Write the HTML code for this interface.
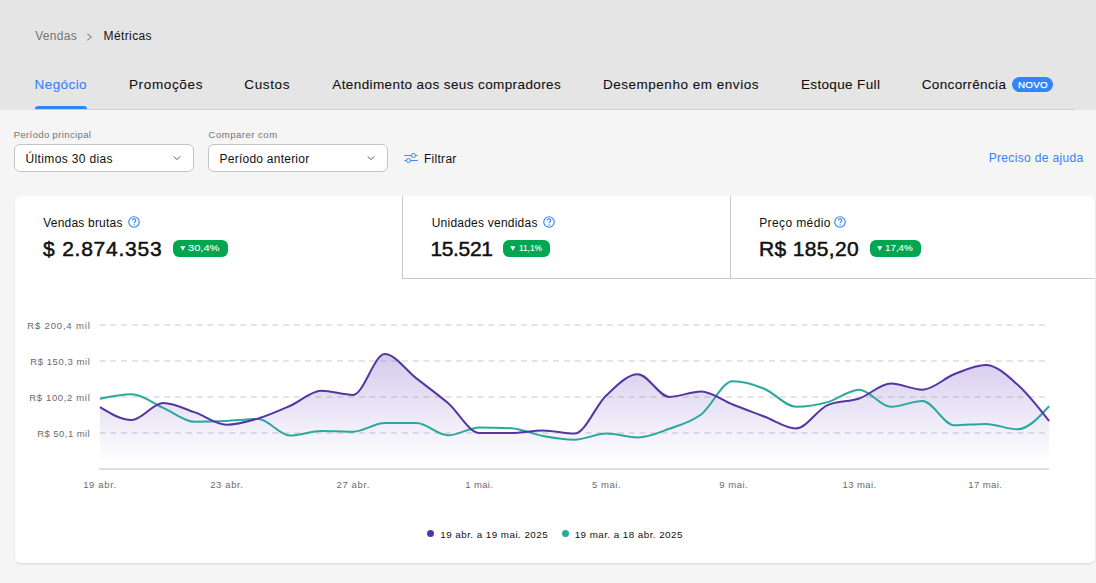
<!DOCTYPE html>
<html><head><meta charset="utf-8"><style>
*{margin:0;padding:0;box-sizing:border-box}
html,body{width:1096px;height:583px;overflow:hidden;background:#f5f5f5;font-family:"Liberation Sans",sans-serif}
.t{position:absolute;white-space:nowrap}
.a{position:absolute}
#hdr{position:absolute;left:0;top:0;width:1096px;height:110px;background:#e5e5e5}
#hline{position:absolute;left:35px;top:109px;width:1040px;height:1px;background:#cecece}
#uline{position:absolute;left:35px;top:106px;width:52px;height:3px;background:#3483fa;border-radius:3px 3px 0 0}
.novo{position:absolute;left:1012px;top:77px;width:41px;height:15px;border-radius:8px;background:#3483fa;color:#fff;font-size:9.5px;line-height:15px;text-align:center;font-weight:700;letter-spacing:0.2px}
.sel{position:absolute;top:144px;height:28px;background:#fff;border:1px solid #c4c4c4;border-radius:6px}
#card{position:absolute;left:15px;top:196px;width:1080px;height:367px;background:#fff;border-radius:6px;box-shadow:0 1px 2px rgba(0,0,0,.12)}
.badge{position:absolute;top:240px;height:17px;border-radius:6px;background:#00a650;color:#fff;font-size:10px;line-height:17px;text-align:center;letter-spacing:-0.2px}
.help{position:absolute;width:12px;height:12px}
</style></head><body>
<div id="hdr"></div><div id="hline"></div><div id="uline"></div>
<div class="t" style="left:35.24px;top:30.00px;font-size:12px;line-height:12px;color:#737373;font-weight:400;letter-spacing:0.292px;">Vendas</div>
<svg class="a" style="left:85px;top:32px" width="9" height="10" viewBox="0 0 9 10"><path d="M2.3,1.6L6.2,5L2.3,8.4" fill="none" stroke="#8c8c8c" stroke-width="1.1"/></svg>
<div class="t" style="left:103.54px;top:30.00px;font-size:12px;line-height:12px;color:#111;font-weight:400;letter-spacing:0.389px;">Métricas</div>
<div class="t" style="left:34.62px;top:78.00px;font-size:13.5px;line-height:13.5px;color:#3483fa;font-weight:400;letter-spacing:0.412px;-webkit-text-stroke:0.1px #3483fa">Negócio</div>
<div class="t" style="left:128.92px;top:78.00px;font-size:13.5px;line-height:13.5px;color:#111;font-weight:400;letter-spacing:0.655px;-webkit-text-stroke:0.1px #111">Promoções</div>
<div class="t" style="left:244.32px;top:78.00px;font-size:13.5px;line-height:13.5px;color:#111;font-weight:400;letter-spacing:0.632px;-webkit-text-stroke:0.1px #111">Custos</div>
<div class="t" style="left:332.3px;top:78.00px;font-size:13.5px;line-height:13.5px;color:#111;font-weight:400;letter-spacing:0.398px;-webkit-text-stroke:0.1px #111">Atendimento aos seus compradores</div>
<div class="t" style="left:602.92px;top:78.00px;font-size:13.5px;line-height:13.5px;color:#111;font-weight:400;letter-spacing:0.524px;-webkit-text-stroke:0.1px #111">Desempenho em envios</div>
<div class="t" style="left:800.92px;top:78.00px;font-size:13.5px;line-height:13.5px;color:#111;font-weight:400;letter-spacing:0.36px;-webkit-text-stroke:0.1px #111">Estoque Full</div>
<div class="t" style="left:921.72px;top:78.00px;font-size:13.5px;line-height:13.5px;color:#111;font-weight:400;letter-spacing:0.356px;-webkit-text-stroke:0.1px #111">Concorrência</div>
<div class="a" style="left:1012px;top:77px;width:41px;height:15px;border-radius:8px;background:#3483fa"></div>
<div class="t" style="left:1018.02px;top:80.00px;font-size:9.8px;line-height:9.8px;color:#fff;font-weight:400;letter-spacing:0.238px;-webkit-text-stroke:0.25px #fff">NOVO</div>
<div class="t" style="left:13.74px;top:130.00px;font-size:9.5px;line-height:9.5px;color:#737373;font-weight:400;letter-spacing:0.367px;">Período principal</div>
<div class="t" style="left:208.52px;top:130.00px;font-size:9.5px;line-height:9.5px;color:#737373;font-weight:400;letter-spacing:0.523px;">Comparer com</div>
<div class="sel" style="left:14px;width:180px"></div>
<div class="sel" style="left:208px;width:180px"></div>
<div class="t" style="left:25.6px;top:153.00px;font-size:12px;line-height:12px;color:#111;font-weight:400;letter-spacing:0.343px;">Últimos 30 dias</div>
<div class="t" style="left:219.54px;top:153.00px;font-size:12px;line-height:12px;color:#111;font-weight:400;letter-spacing:0.24px;">Período anterior</div>
<svg class="a" style="left:171.5px;top:154px" width="10" height="8" viewBox="0 0 10 8"><path d="M1.8,2.4L5,5.6L8.2,2.4" fill="none" stroke="#555" stroke-width="1"/></svg>
<svg class="a" style="left:366px;top:154px" width="10" height="8" viewBox="0 0 10 8"><path d="M1.8,2.4L5,5.6L8.2,2.4" fill="none" stroke="#555" stroke-width="1"/></svg>
<svg class="a" style="left:403px;top:151px" width="16" height="13" viewBox="0 0 16 13"><g fill="none" stroke="#3483fa" stroke-width="0.95"><path d="M1.3,4.5H8.4M12.6,4.5H14.7"/><circle cx="10.5" cy="4.5" r="2.05"/><path d="M1.3,9.5H3.4M7.6,9.5H14.7"/><circle cx="5.5" cy="9.5" r="2.05"/></g></svg>
<div class="t" style="left:423.94px;top:153.00px;font-size:12px;line-height:12px;color:#111;font-weight:400;letter-spacing:0.29px;">Filtrar</div>
<div class="t" style="left:988.64px;top:152.00px;font-size:12px;line-height:12px;color:#3483fa;font-weight:400;letter-spacing:0.351px;">Preciso de ajuda</div>
<div id="card"></div>
<div class="a" style="left:402px;top:196px;width:1px;height:83px;background:#c9c9c9"></div>
<div class="a" style="left:730px;top:196px;width:1px;height:83px;background:#c9c9c9"></div>
<div class="a" style="left:402px;top:278px;width:693px;height:1px;background:#c9c9c9"></div>
<div class="t" style="left:43.24px;top:217.00px;font-size:12px;line-height:12px;color:#111;font-weight:400;letter-spacing:0.203px;">Vendas brutas</div>
<svg class="help" style="left:128.2px;top:215.8px" viewBox="0 0 12 12"><circle cx="6" cy="6" r="5.25" fill="none" stroke="#3483fa" stroke-width="1.15"/><path d="M4.2,4.6C4.2,3.5,5,2.9,6,2.9C7,2.9,7.8,3.6,7.8,4.5C7.8,5.7,6.1,5.8,6.1,7.2" fill="none" stroke="#3483fa" stroke-width="1.1"/><circle cx="6.1" cy="8.9" r="0.7" fill="#3483fa"/></svg>
<div class="t" style="left:431.7px;top:217.00px;font-size:12px;line-height:12px;color:#111;font-weight:400;letter-spacing:0.229px;">Unidades vendidas</div>
<svg class="help" style="left:543px;top:215.8px" viewBox="0 0 12 12"><circle cx="6" cy="6" r="5.25" fill="none" stroke="#3483fa" stroke-width="1.15"/><path d="M4.2,4.6C4.2,3.5,5,2.9,6,2.9C7,2.9,7.8,3.6,7.8,4.5C7.8,5.7,6.1,5.8,6.1,7.2" fill="none" stroke="#3483fa" stroke-width="1.1"/><circle cx="6.1" cy="8.9" r="0.7" fill="#3483fa"/></svg>
<div class="t" style="left:759.24px;top:217.00px;font-size:12px;line-height:12px;color:#111;font-weight:400;letter-spacing:0.386px;">Preço médio</div>
<svg class="help" style="left:834.2px;top:215.8px" viewBox="0 0 12 12"><circle cx="6" cy="6" r="5.25" fill="none" stroke="#3483fa" stroke-width="1.15"/><path d="M4.2,4.6C4.2,3.5,5,2.9,6,2.9C7,2.9,7.8,3.6,7.8,4.5C7.8,5.7,6.1,5.8,6.1,7.2" fill="none" stroke="#3483fa" stroke-width="1.1"/><circle cx="6.1" cy="8.9" r="0.7" fill="#3483fa"/></svg>
<div class="t" style="left:43.09px;top:238.00px;font-size:21px;line-height:21px;color:#111;font-weight:400;letter-spacing:0.767px;-webkit-text-stroke:0.5px #111">$ 2.874.353</div>
<div class="t" style="left:430.42px;top:238.00px;font-size:21px;line-height:21px;color:#111;font-weight:400;letter-spacing:-0.348px;-webkit-text-stroke:0.5px #111">15.521</div>
<div class="t" style="left:759.12px;top:238.00px;font-size:21px;line-height:21px;color:#111;font-weight:400;letter-spacing:0.338px;-webkit-text-stroke:0.5px #111">R$ 185,20</div>
<div class="badge" style="left:172.7px;width:55.4px"></div>
<svg class="a" style="left:179.6px;top:245.8px" width="6" height="5" viewBox="0 0 6 5"><path d="M0.2,0.2H5.4L2.8,4.8Z" fill="#fff"/></svg>
<div class="t" style="left:188.36px;top:243.00px;font-size:9.5px;line-height:9.5px;color:#fff;font-weight:400;letter-spacing:0px;-webkit-text-stroke:0.1px #fff;transform:scaleX(1.167);transform-origin:0 0">30,4%</div>
<div class="badge" style="left:503.2px;width:46.8px"></div>
<svg class="a" style="left:510.09999999999997px;top:245.8px" width="6" height="5" viewBox="0 0 6 5"><path d="M0.2,0.2H5.4L2.8,4.8Z" fill="#fff"/></svg>
<div class="t" style="left:518.68px;top:243.00px;font-size:9.5px;line-height:9.5px;color:#fff;font-weight:400;letter-spacing:0px;-webkit-text-stroke:0.1px #fff;transform:scaleX(0.874);transform-origin:0 0">11,1%</div>
<div class="badge" style="left:869.7px;width:51.5px"></div>
<svg class="a" style="left:876.6px;top:245.8px" width="6" height="5" viewBox="0 0 6 5"><path d="M0.2,0.2H5.4L2.8,4.8Z" fill="#fff"/></svg>
<div class="t" style="left:885.07px;top:243.00px;font-size:9.5px;line-height:9.5px;color:#fff;font-weight:400;letter-spacing:0px;-webkit-text-stroke:0.1px #fff;transform:scaleX(1.031);transform-origin:0 0">17,4%</div>
<svg class="a" style="left:0;top:0" width="1096" height="583" viewBox="0 0 1096 583">
<defs><linearGradient id="g" x1="0" y1="0" x2="0" y2="1"><stop offset="0" stop-color="#7b5cc4" stop-opacity="0.32"/><stop offset="0.95" stop-color="#7b5cc4" stop-opacity="0"/></linearGradient></defs>
<g stroke="#dcdcdc" stroke-width="1.6" stroke-dasharray="6 4.8">
<path d="M99.5,325H1046"/><path d="M99.5,361H1046"/><path d="M99.5,397H1046"/><path d="M99.5,433H1046"/>
</g>
<path d="M100.0,407.2C110.5,413.6,121.1,420.0,131.6,420.0C142.2,420.0,152.7,403.1,163.3,403.1C173.8,403.1,184.4,408.8,194.9,412.4C205.5,416.0,216.0,424.7,226.5,424.7C237.1,424.7,247.6,421.6,258.2,418.5C268.7,415.4,279.3,410.6,289.8,406.0C300.4,401.4,310.9,390.7,321.4,390.7C332.0,390.7,342.5,394.9,353.1,394.9C363.6,394.9,374.2,354.1,384.7,354.1C395.3,354.1,405.8,370.2,416.4,378.4C426.9,386.6,437.4,394.0,448.0,403.1C458.5,412.2,469.1,433.0,479.6,433.0C490.2,433.0,500.7,433.0,511.3,433.0C521.8,433.0,532.3,430.5,542.9,430.5C553.4,430.5,564.0,433.6,574.5,433.6C585.1,433.6,595.6,405.4,606.2,395.5C616.7,385.6,627.3,374.2,637.8,374.2C648.3,374.2,658.9,396.9,669.4,396.9C680.0,396.9,690.5,391.4,701.1,391.4C711.6,391.4,722.2,400.3,732.7,404.5C743.2,408.7,753.8,412.5,764.3,416.5C774.9,420.5,785.4,428.4,796.0,428.4C806.5,428.4,817.1,409.5,827.6,405.1C838.1,400.7,848.7,402.1,859.2,398.5C869.8,394.9,880.3,383.5,890.9,383.5C901.4,383.5,912.0,389.7,922.5,389.7C933.1,389.7,943.6,378.4,954.1,374.3C964.7,370.2,975.2,365.0,985.8,365.0C996.3,365.0,1006.9,375.2,1017.4,384.5C1028.0,393.8,1038.5,407.4,1049.1,421.0L1049.1,469L100.0,469Z" fill="url(#g)"/>
<path d="M99,469H1049" stroke="#dedede" stroke-width="2"/>
<path d="M100.0,398.8C110.5,396.5,121.1,394.2,131.6,394.2C142.2,394.2,152.7,403.2,163.3,407.8C173.8,412.4,184.4,421.8,194.9,421.8C205.5,421.8,216.0,421.5,226.5,421.0C237.1,420.5,247.6,419.0,258.2,419.0C268.7,419.0,279.3,435.5,289.8,435.5C300.4,435.5,310.9,430.9,321.4,430.9C332.0,430.9,342.5,431.7,353.1,431.7C363.6,431.7,374.2,423.1,384.7,423.1C395.3,423.1,405.8,423.1,416.4,423.1C426.9,423.1,437.4,435.3,448.0,435.3C458.5,435.3,469.1,427.4,479.6,427.4C490.2,427.4,500.7,427.7,511.3,428.2C521.8,428.7,532.3,434.1,542.9,436.0C553.4,437.9,564.0,439.7,574.5,439.7C585.1,439.7,595.6,433.6,606.2,433.6C616.7,433.6,627.3,437.5,637.8,437.5C648.3,437.5,658.9,432.6,669.4,428.8C680.0,425.0,690.5,422.4,701.1,414.5C711.6,406.6,722.2,381.2,732.7,381.2C743.2,381.2,753.8,384.4,764.3,388.7C774.9,393.0,785.4,406.8,796.0,406.8C806.5,406.8,817.1,405.0,827.6,402.1C838.1,399.2,848.7,389.7,859.2,389.7C869.8,389.7,880.3,406.8,890.9,406.8C901.4,406.8,912.0,401.0,922.5,401.0C933.1,401.0,943.6,425.3,954.1,425.3C964.7,425.3,975.2,423.9,985.8,423.9C996.3,423.9,1006.9,429.3,1017.4,429.3C1028.0,429.3,1038.5,417.8,1049.1,406.2" fill="none" stroke="#2ba89e" stroke-width="2"/>
<path d="M100.0,407.2C110.5,413.6,121.1,420.0,131.6,420.0C142.2,420.0,152.7,403.1,163.3,403.1C173.8,403.1,184.4,408.8,194.9,412.4C205.5,416.0,216.0,424.7,226.5,424.7C237.1,424.7,247.6,421.6,258.2,418.5C268.7,415.4,279.3,410.6,289.8,406.0C300.4,401.4,310.9,390.7,321.4,390.7C332.0,390.7,342.5,394.9,353.1,394.9C363.6,394.9,374.2,354.1,384.7,354.1C395.3,354.1,405.8,370.2,416.4,378.4C426.9,386.6,437.4,394.0,448.0,403.1C458.5,412.2,469.1,433.0,479.6,433.0C490.2,433.0,500.7,433.0,511.3,433.0C521.8,433.0,532.3,430.5,542.9,430.5C553.4,430.5,564.0,433.6,574.5,433.6C585.1,433.6,595.6,405.4,606.2,395.5C616.7,385.6,627.3,374.2,637.8,374.2C648.3,374.2,658.9,396.9,669.4,396.9C680.0,396.9,690.5,391.4,701.1,391.4C711.6,391.4,722.2,400.3,732.7,404.5C743.2,408.7,753.8,412.5,764.3,416.5C774.9,420.5,785.4,428.4,796.0,428.4C806.5,428.4,817.1,409.5,827.6,405.1C838.1,400.7,848.7,402.1,859.2,398.5C869.8,394.9,880.3,383.5,890.9,383.5C901.4,383.5,912.0,389.7,922.5,389.7C933.1,389.7,943.6,378.4,954.1,374.3C964.7,370.2,975.2,365.0,985.8,365.0C996.3,365.0,1006.9,375.2,1017.4,384.5C1028.0,393.8,1038.5,407.4,1049.1,421.0" fill="none" stroke="#5535a3" stroke-width="2"/>
</svg>
<div class="t" style="left:27.24px;top:321.00px;font-size:9.5px;line-height:9.5px;color:#6b6b6b;font-weight:400;letter-spacing:0.835px;">R$ 200,4 mil</div>
<div class="t" style="left:30.34px;top:357.00px;font-size:9.5px;line-height:9.5px;color:#6b6b6b;font-weight:400;letter-spacing:0.553px;">R$ 150,3 mil</div>
<div class="t" style="left:29.24px;top:393.00px;font-size:9.5px;line-height:9.5px;color:#6b6b6b;font-weight:400;letter-spacing:0.653px;">R$ 100,2 mil</div>
<div class="t" style="left:37.24px;top:429.00px;font-size:9.5px;line-height:9.5px;color:#6b6b6b;font-weight:400;letter-spacing:0.445px;">R$ 50,1 mil</div>
<div class="t" style="left:83.19px;top:480.00px;font-size:9.5px;line-height:9.5px;color:#6b6b6b;font-weight:400;letter-spacing:0.641px;">19 abr.</div>
<div class="t" style="left:210.23px;top:480.00px;font-size:9.5px;line-height:9.5px;color:#6b6b6b;font-weight:400;letter-spacing:0.618px;">23 abr.</div>
<div class="t" style="left:336.52px;top:480.00px;font-size:9.5px;line-height:9.5px;color:#6b6b6b;font-weight:400;letter-spacing:0.618px;">27 abr.</div>
<div class="t" style="left:465.29px;top:480.00px;font-size:9.5px;line-height:9.5px;color:#6b6b6b;font-weight:400;letter-spacing:0.345px;">1 mai.</div>
<div class="t" style="left:591.97px;top:480.00px;font-size:9.5px;line-height:9.5px;color:#6b6b6b;font-weight:400;letter-spacing:0.539px;">5 mai.</div>
<div class="t" style="left:719.32px;top:480.00px;font-size:9.5px;line-height:9.5px;color:#6b6b6b;font-weight:400;letter-spacing:0.548px;">9 mai.</div>
<div class="t" style="left:842.44px;top:480.00px;font-size:9.5px;line-height:9.5px;color:#6b6b6b;font-weight:400;letter-spacing:0.426px;">13 mai.</div>
<div class="t" style="left:968.24px;top:480.00px;font-size:9.5px;line-height:9.5px;color:#6b6b6b;font-weight:400;letter-spacing:0.426px;">17 mai.</div>
<div class="a" style="left:427.3px;top:529.8px;width:7px;height:7px;border-radius:50%;background:#5535a3"></div>
<div class="a" style="left:562.2px;top:529.8px;width:7px;height:7px;border-radius:50%;background:#2ba89e"></div>
<div class="t" style="left:440.26px;top:530.00px;font-size:9.8px;line-height:9.8px;color:#111;font-weight:400;letter-spacing:0.472px;">19 abr. a 19 mai. 2025</div>
<div class="t" style="left:574.66px;top:530.00px;font-size:9.8px;line-height:9.8px;color:#111;font-weight:400;letter-spacing:0.461px;">19 mar. a 18 abr. 2025</div>
</body></html>
